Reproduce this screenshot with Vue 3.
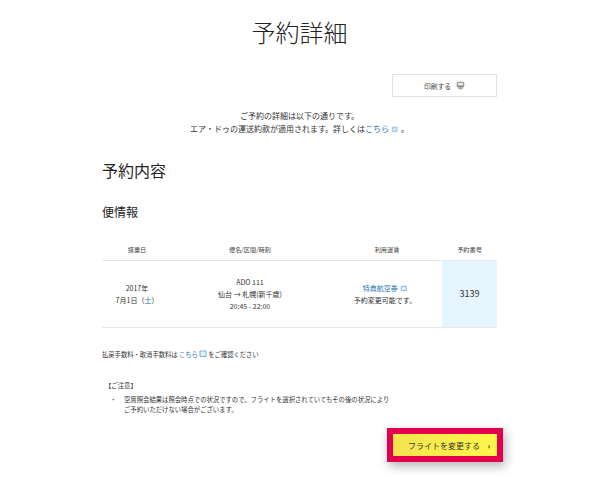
<template>
  <div class="page">
    <h1 class="title">予約詳細</h1>

    <div class="print-row">
      <a class="print-btn">
        印刷する
        <svg class="print-icon" viewBox="0 0 10 10" width="9" height="9">
          <rect x="0.8" y="0.8" width="8.4" height="6.4" rx="2" fill="#8a8a8a" />
          <rect x="2" y="2" width="6" height="3" rx="0.6" fill="#e8e8e8" />
          <rect x="2.5" y="7" width="5" height="2.2" fill="#a8a8a8" />
        </svg>
      </a>
    </div>

    <div class="intro">
      <p>ご予約の詳細は以下の通りです。</p>
      <p>エア・ドゥの運送約款が適用されます。詳しくは<span class="link">こちら</span><svg class="ext ext-wide" viewBox="0 0 8 8" width="7" height="7"><path d="M1.5 1.5h5.5v5H1.5z" fill="#cfe6f5" stroke="#7fb4d8" stroke-width="0.8" /></svg>。</p>
    </div>

    <h2 class="section">予約内容</h2>
    <h3 class="sub">便情報</h3>

    <div class="table">
      <div class="th">搭乗日</div>
      <div class="th">便名/区間/時刻</div>
      <div class="th th-terms">利用運賃</div>
      <div class="th">予約番号</div>

      <div class="td">
        <div>2017年</div>
        <div>7月1日（<span class="link">土</span>）</div>
      </div>
      <div class="td">
        <div>ADO 111</div>
        <div>仙台 → 札幌(新千歳)</div>
        <div>20:45 - 22:00</div>
      </div>
      <div class="td">
        <div><span class="link">特典航空券</span> <svg class="ext" viewBox="0 0 8 8" width="7" height="7"><path d="M1.5 1.5h5.5v5H1.5z" fill="#e3f1fa" stroke="#5b9fd0" stroke-width="0.8" /></svg></div>
        <div>予約変更可能です。</div>
      </div>
      <div class="td td-number">3139</div>
    </div>

    <p class="fee">
      払戻手数料・取消手数料は <span class="link">こちら</span>
      <svg class="ext" viewBox="0 0 8 8" width="8" height="8"><path d="M1 1h6v5.5H1z" fill="#e3f1fa" stroke="#5b9fd0" stroke-width="0.8" /></svg>
      をご確認ください
    </p>

    <div class="notes">
      <div class="notes-head">【ご注意】</div>
      <div class="notes-item">
        <span class="dot">・</span>
        <p>空席照会結果は照会時点での状況ですので、フライトを選択されていてもその後の状況により<br />ご予約いただけない場合がございます。</p>
      </div>
    </div>

    <div class="action">
      <a class="change-btn">
        <span>フライトを変更する</span>
        <span class="arrow">›</span>
      </a>
    </div>
  </div>
</template>

<script setup>
</script>

<style>
body {
  background: #fff;
}
</style>

<style scoped>
.page {
  width: 600px;
  height: 483px;
  box-sizing: border-box;
  padding: 17px 103px 0 102px;
  overflow: hidden;
  font-family: "Noto Sans CJK JP", "Noto Sans", sans-serif;
  color: #333;
}

p,
h1,
h2,
h3 {
  margin: 0;
  font-weight: 400;
}

.title {
  font-size: 24px;
  line-height: 30px;
  text-align: center;
  color: #222;
  font-weight: 300;
}

.print-row {
  display: flex;
  justify-content: flex-end;
  margin-top: 27px;
}

.print-btn {
  width: 105px;
  height: 23px;
  box-sizing: border-box;
  border: 1px solid #e2e2e2;
  display: flex;
  align-items: center;
  justify-content: center;
  gap: 5px;
  font-size: 6.8px;
  color: #444;
}

.print-icon {
  display: block;
}

.intro {
  margin-top: 12px;
  text-align: center;
  font-size: 8px;
  line-height: 13px;
}

.link {
  color: #1f74b0;
}

.ext {
  vertical-align: -1px;
  margin-left: 1px;
}

.ext-wide {
  margin: 0 3px 0 2px;
}

.section {
  margin-top: 23px;
  font-size: 16px;
  line-height: 24px;
  color: #222;
}

.sub {
  margin-top: 22px;
  font-size: 12px;
  line-height: 16px;
  color: #222;
}

.table {
  display: grid;
  grid-template-columns: 70px 156px 114px 55px;
  grid-template-rows: 33px 66px;
  margin-top: 8px;
  border-bottom: 1px solid #e8e8e8;
}

.th {
  display: flex;
  align-items: center;
  justify-content: center;
  padding-top: 11px;
  font-size: 6.2px;
  color: #444;
  border-bottom: 1px solid #e8e8e8;
}

.th-terms {
  padding-left: 4px;
}

.td {
  display: flex;
  flex-direction: column;
  align-items: center;
  justify-content: center;
  font-size: 7px;
  line-height: 12px;
}

.td-number {
  background: #e6f4fd;
  font-size: 9px;
  color: #333;
}

.fee {
  margin-top: 22px;
  font-size: 6.3px;
  line-height: 10px;
}

.notes {
  margin-top: 21px;
  font-size: 6.35px;
  line-height: 10px;
}

.notes-head {
  margin-left: 3px;
  margin-bottom: 4px;
}

.notes-item {
  display: flex;
  padding-left: 8px;
}

.dot {
  width: 14px;
}

.action {
  display: flex;
  justify-content: flex-end;
  margin: 13px -6px 0 0;
}

.change-btn {
  width: 116px;
  height: 34px;
  box-sizing: border-box;
  border: 6px solid #e3004f;
  background: linear-gradient(90deg, #f2e44e, #fff64c);
  box-shadow: 2px 4px 10px rgba(0, 0, 0, 0.3);
  display: flex;
  align-items: center;
  justify-content: space-between;
  padding: 0 7px 0 15px;
  font-size: 8px;
  color: #333;
}

.arrow {
  font-size: 8px;
  font-weight: 700;
}
</style>
